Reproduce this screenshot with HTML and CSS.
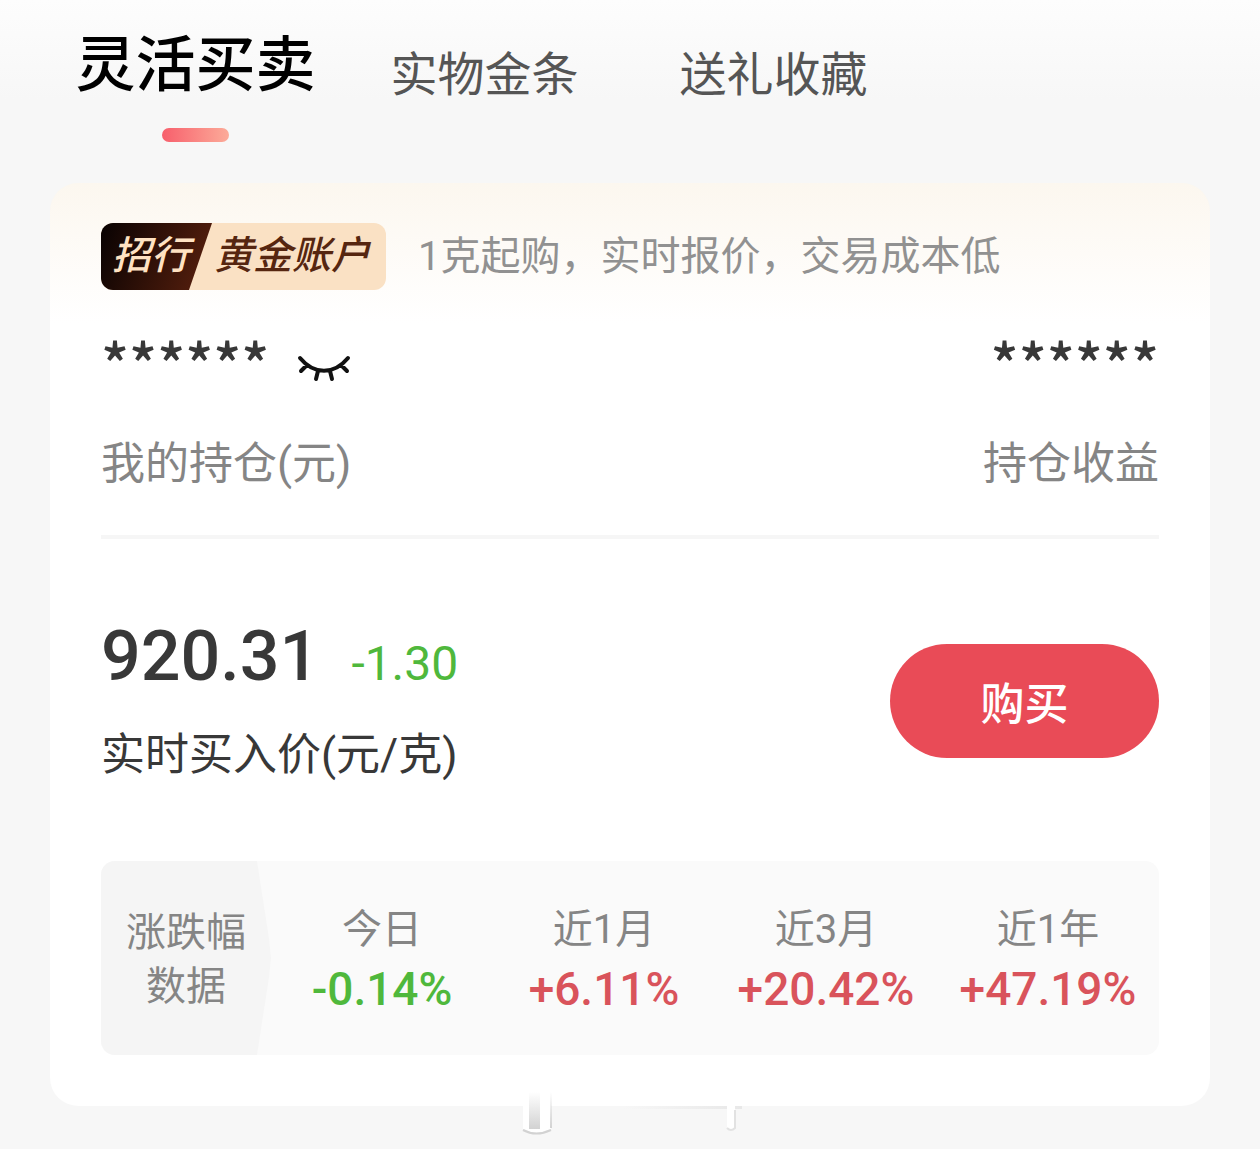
FILE: index.html
```html
<!DOCTYPE html>
<html lang="zh-CN">
<head>
<meta charset="utf-8">
<meta name="viewport" content="width=device-width, initial-scale=1">
<title>黄金账户</title>
<link rel="stylesheet" href="styles.css">
</head>
<body>
<nav class="tabs">
  <a class="tab tab-active" href="#trade" aria-current="page">灵活买卖</a>
  <a class="tab" href="#bars">实物金条</a>
  <a class="tab" href="#gifts">送礼收藏</a>
</nav>
<main class="card">
  <header class="intro">
    <div class="badge"><span class="badge-bank">招行</span><span class="badge-name">黄金账户</span></div>
    <p class="slogan">1克起购，实时报价，交易成本低</p>
  </header>
  <section class="holdings">
    <div class="holding">
      <div class="masked-row">
        <span class="masked">******</span>
        <button class="eye" type="button" aria-label="显示金额">
          <svg width="54" height="28" viewBox="0 0 54 28" fill="none" stroke="#111" stroke-width="4" stroke-linecap="round">
            <path d="M3 4C17 21 37 21 51 4M10 11L4 17M44 11L50 17M21 17L19 25M33 17L35 25"/>
          </svg>
        </button>
      </div>
      <p class="label">我的持仓(元)</p>
    </div>
    <div class="holding holding-end">
      <div class="masked-row"><span class="masked">******</span></div>
      <p class="label">持仓收益</p>
    </div>
  </section>
  <section class="quote">
    <div>
      <p class="price-row"><strong class="price">920.31</strong><span class="delta">-1.30</span></p>
      <p class="label label-dark">实时买入价(元/克)</p>
    </div>
    <button class="buy" type="button">购买</button>
  </section>
  <section class="stats">
    <h2 class="stats-title">涨跌幅<br>数据</h2>
    <dl class="stats-grid">
      <div class="stat"><dt>今日</dt><dd class="down">-0.14%</dd></div>
      <div class="stat"><dt>近1月</dt><dd>+6.11%</dd></div>
      <div class="stat"><dt>近3月</dt><dd>+20.42%</dd></div>
      <div class="stat"><dt>近1年</dt><dd>+47.19%</dd></div>
    </dl>
  </section>
  <svg class="ghost" width="230" height="50" viewBox="0 0 230 50" aria-hidden="true">
    <defs>
      <linearGradient id="fade" x2="0" y2="1"><stop stop-color="#d2d2d2" stop-opacity="0"/><stop offset="1" stop-color="#d2d2d2"/></linearGradient>
      <linearGradient id="bar"><stop stop-color="#e8e8e8" stop-opacity="0"/><stop offset="1" stop-color="#e8e8e8"/></linearGradient>
    </defs>
    <path d="M9 6V41Q22 48 37 41V6Z" fill="#fff"/>
    <path d="M15 4H26V41H15Z" fill="url(#fade)"/>
    <path d="M36 4H38V40H36Z" fill="url(#fade)"/>
    <path d="M9 42Q22 49 37 42" fill="none" stroke="#d2d2d2" stroke-width="2"/>
    <path d="M110 18H228V21H110Z" fill="url(#bar)"/>
    <path d="M213 6V40Q217 44 221 40V6Z" fill="#fff"/>
    <path d="M221 22V40Q217 44 213 40" fill="none" stroke="#e2e2e2" stroke-width="2"/>
  </svg>
</main>
</body>
</html>
```
FILE: styles.css
```css
* { box-sizing: border-box; }

body {
  margin: 0;
  padding: 0 50px 43px;
  background: #f7f7f7 linear-gradient(#fdfdfd, #f7f7f7) no-repeat 0 0 / 100% 100px;
  color: #383838;
  font-family: Roboto, "Noto Sans CJK SC", sans-serif;
}

p, h2, dl, dd { margin: 0; }
button { border: 0; padding: 0; font-family: inherit; }

.tabs {
  display: grid;
  grid-template-columns: repeat(3, 289px);
  align-items: start;
  height: 183px;
  padding-left: 1px;
}

.tab {
  padding-top: 41px;
  color: #555;
  font-size: 47px;
  line-height: 68px;
  text-align: center;
  text-decoration: none;
}

.tab-active {
  display: flex;
  flex-direction: column;
  align-items: center;
  gap: 28px;
  padding-top: 32px;
  color: #000;
  font-size: 60px;
  font-weight: 500;
}

.tab-active::after {
  content: "";
  width: 67px;
  height: 14px;
  border-radius: 7px;
  background: linear-gradient(90deg, #f75f6c, #fcab99);
}

.card {
  position: relative;
  padding: 40px 51px 51px;
  border-radius: 28px;
  background: #fff linear-gradient(#fcf7ef, #fff) no-repeat 0 0 / 100% 140px;
}

.intro {
  display: flex;
  align-items: center;
  gap: 32px;
}

.badge {
  display: flex;
  border-radius: 12px;
  overflow: hidden;
  background: #fae1c4;
  color: #562610;
  font-size: 39px;
  font-style: italic;
  font-weight: 500;
  line-height: 67px;
}

.badge-bank {
  width: 111px;
  padding-left: 11px;
  background: linear-gradient(110deg, #080202, #5c210e);
  clip-path: polygon(0 0, 100% 0, 88px 100%, 0 100%);
  color: #ffe2c2;
}

.badge-name { padding: 0 16px 0 2px; }

.slogan {
  color: #919191;
  font-size: 40px;
  line-height: 60px;
}

.holdings {
  display: flex;
  justify-content: space-between;
  padding: 40px 0 39px;
  border-bottom: 4px solid #f6f6f6;
}

.holding-end { text-align: right; }

.masked-row {
  display: flex;
  align-items: flex-start;
  gap: 28px;
  height: 72px;
}

.holding-end .masked-row { justify-content: flex-end; }

.masked {
  font-family: "Noto Sans CJK SC", sans-serif;
  font-size: 58px;
  font-weight: 500;
  line-height: 64px;
}

.eye {
  display: flex;
  margin-top: 24px;
  background: none;
}

.label {
  margin-top: 30px;
  color: #858585;
  font-size: 44px;
  line-height: 64px;
}

.quote {
  display: flex;
  align-items: center;
  justify-content: space-between;
  padding-top: 75px;
}

.price-row {
  display: flex;
  align-items: baseline;
  gap: 32px;
}

.price {
  font-size: 70px;
  font-weight: 500;
  line-height: 84px;
}

.delta {
  color: #4fb83c;
  font-size: 48px;
}

.label-dark {
  margin-top: 25px;
  color: #383838;
}

.buy {
  width: 269px;
  height: 114px;
  border-radius: 57px;
  background: #e94b57;
  color: #fff;
  font-size: 44px;
  font-weight: 500;
}

.stats {
  display: flex;
  margin-top: 74px;
  border-radius: 14px;
  overflow: hidden;
  background: #fafafa;
}

.stats-title {
  width: 170px;
  padding: 45px 0 41px;
  background: #f5f5f5;
  clip-path: polygon(0 0, 156px 0, 168px 40%, 170px 50%, 168px 60%, 156px 100%, 0 100%);
  color: #858585;
  font-size: 40px;
  font-weight: 400;
  line-height: 54px;
  text-align: center;
}

.stats-grid {
  flex: 1;
  display: grid;
  grid-template-columns: repeat(4, 1fr);
  align-content: center;
  padding-top: 4px;
  text-align: center;
}

.stat dt {
  color: #858585;
  font-size: 40px;
  line-height: 58px;
}

.stat dd {
  color: #d9535b;
  font-size: 46px;
  font-weight: 500;
  line-height: 60px;
}

.stat .down { color: #4fb83c; }

.ghost {
  position: absolute;
  bottom: -32px;
  left: 464px;
}
```
